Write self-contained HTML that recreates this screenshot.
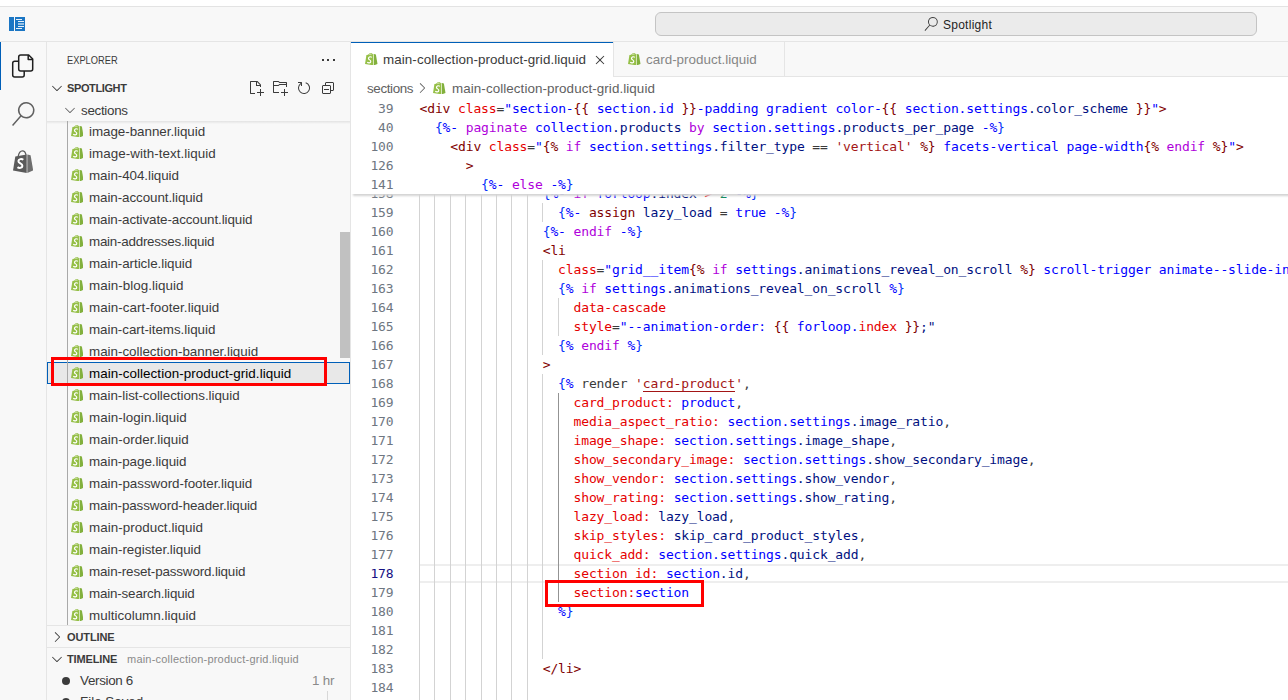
<!DOCTYPE html>
<html lang="en"><head><meta charset="utf-8"><title>Spotlight - main-collection-product-grid.liquid</title>
<style>
html,body{margin:0;padding:0}
body{width:1288px;height:700px;overflow:hidden;position:relative;background:#f8f8f8;font-family:"Liberation Sans",sans-serif;font-size:13.4px;color:#3b3b3b}
.abs{position:absolute}
.ui{position:absolute;white-space:nowrap;line-height:22px;height:22px;padding-top:1px}

.num{position:absolute;left:351px;width:42.5px;text-align:right;font-family:"DejaVu Sans Mono","Liberation Mono",monospace;font-size:13px;letter-spacing:-0.126px;line-height:19px;height:19px;white-space:pre}
.code{position:absolute;font-family:"DejaVu Sans Mono","Liberation Mono",monospace;font-size:13px;letter-spacing:-0.126px;line-height:19px;height:19px;white-space:pre}
.guide{position:absolute;width:1px;background:#d3d3d3}
</style></head><body>

<div class="abs" style="left:0;top:0;width:1288px;height:6px;background:#fff"></div>
<div class="abs" style="left:0;top:6px;width:1288px;height:1px;background:#e3e3e3"></div>
<div class="abs" style="left:0;top:41px;width:1288px;height:1px;background:#e5e5e5"></div>
<svg class="abs" style="left:9px;top:17px" width="16" height="14" viewBox="0 0 16 14"><rect x="0" y="0" width="5" height="14" fill="#1b76c4"/><rect x="6" y="0" width="10" height="14" fill="#1b76c4"/><g fill="#e8f1fa"><rect x="7" y="2" width="6" height="1"/><rect x="9" y="4" width="6" height="1"/><rect x="9" y="6" width="6" height="2" opacity=".6"/><rect x="9" y="9" width="6" height="1"/><rect x="7" y="11" width="6" height="1"/></g></svg>
<div class="abs" style="left:655px;top:12px;width:600px;height:22px;border:1px solid #c4c4c4;border-radius:6px;background:#ebebeb"></div>
<svg class="abs" style="left:924px;top:17px" width="14" height="14" viewBox="0 0 24 24"><path fill="#3b3b3b" d="M15.25 0a8.25 8.25 0 0 0-6.18 13.720L1 22.880l1.120 1 8.050-9.120A8.251 8.251 0 1 0 15.250.010V0zm0 15a6.750 6.750 0 1 1 0-13.500 6.750 6.750 0 0 1 0 13.500z"/></svg>
<div class="ui" id="t_spot" style="left:943px;top:13px;font-size:12px;color:#1f1f1f;letter-spacing:0.255px">Spotlight</div>
<div class="abs" style="left:46px;top:42px;width:1px;height:658px;background:#e5e5e5"></div>
<div class="abs" style="left:0;top:42px;width:1.2px;height:48px;background:#005fb8"></div>
<svg class="abs" style="left:11px;top:54px" width="24" height="24" viewBox="0 0 24 24" fill="none" stroke="#1f1f1f" stroke-width="1.5" stroke-linejoin="round"><path d="M7.700 7.200H3.700a2 2 0 0 0-2 2V21a2 2 0 0 0 2 2h7.500a2 2 0 0 0 2-2v-4"/><path d="M9.700 1h8l4 4v10a2 2 0 0 1-2 2H9.700a2 2 0 0 1-2-2V3a2 2 0 0 1 2-2z"/><path d="M17.200 1v4.500h4.500"/></svg>
<svg class="abs" style="left:11px;top:102px" width="24" height="24" viewBox="0 0 24 24"><path fill="#616161" d="M15.25 0a8.25 8.25 0 0 0-6.18 13.720L1 22.880l1.120 1 8.050-9.120A8.251 8.251 0 1 0 15.250.010V0zm0 15a6.750 6.750 0 1 1 0-13.500 6.750 6.750 0 0 1 0 13.500z"/></svg>
<svg class="abs" style="left:12.9px;top:149.7px" width="20.2" height="23" viewBox="0 0 20.2 23" preserveAspectRatio="none"><path d="M5.2 6.4C5.8 3.2 7.8 .9 9.500 .9s3 1.700 3.500 3.900" fill="none" stroke="#5a5a5a" stroke-width="1.3"/><path d="M2.3 6.600 13.700 4.600 13.700 22.900 0 20.600Z" fill="#5a5a5a"/><path d="M14.3 4.500 17.600 5.300 20.200 20.300 14.300 22.900Z" fill="#6e6e6e"/><path d="M10.3 9.700C8.700 8.500 5.500 8.900 5.400 11.100 5.300 13.500 9.500 13.300 9.400 15.900 9.300 18.100 6.100 18.400 4.500 17.100" fill="none" stroke="#fff" stroke-width="2"/></svg>
<div class="abs" style="left:350px;top:42px;width:1px;height:658px;background:#e5e5e5"></div>
<div class="ui" id="t_expl" style="left:67px;top:49px;font-size:11px;padding-top:0;transform:scaleX(.845);transform-origin:0 0">EXPLORER</div>
<div class="abs" style="left:321.5px;top:59px;width:2px;height:2px;background:#3b3b3b"></div>
<div class="abs" style="left:327px;top:59px;width:2px;height:2px;background:#3b3b3b"></div>
<div class="abs" style="left:332.5px;top:59px;width:2px;height:2px;background:#3b3b3b"></div>
<svg class="abs" style="left:49px;top:80px" width="16" height="16" viewBox="0 0 16 16" fill="#3b3b3b"><path fill-rule="evenodd" clip-rule="evenodd" d="M7.976 10.072l4.357-4.357.62.618L8.284 11h-.618L3 6.333l.619-.618 4.357 4.357z"/></svg>
<div class="ui" id="t_spl" style="left:67px;top:77px;font-size:11px;padding-top:0;font-weight:bold;letter-spacing:-0.384px">SPOTLIGHT</div>
<svg class="abs" style="left:248px;top:80px" width="16" height="16" viewBox="0 0 16 16" fill="#3b3b3b"><path fill-rule="evenodd" clip-rule="evenodd" d="M9.500 1.100l3.400 3.500.1.400v2h-1V6H8V2H3v11h4v1H2.500l-.5-.5v-12l.5-.5h6.700l.3.100zM9 2v3h2.900L9 2zm4 14h-1v-3H9v-1h3V9h1v3h3v1h-3v3z"/></svg>
<svg class="abs" style="left:271.5px;top:80px" width="16" height="16" viewBox="0 0 16 16" fill="#3b3b3b"><path fill-rule="evenodd" clip-rule="evenodd" d="M14.500 2H7.710l-.85-.85L6.510 1h-5l-.5.500v11l.5.500H7v-1H1.990V6h4.490l.35-.15.860-.86H14v1.500l-.001.510h1.011V2.500L14.500 2zm-.51 2h-6.500l-.35.150-.86.860H2v-3h4.290l.85.850.36.150H14l-.1.990zM13 16h-1v-3H9v-1h3V9h1v3h3v1h-3v3z"/></svg>
<svg class="abs" style="left:295.5px;top:80px" width="16" height="16" viewBox="0 0 16 16" fill="#3b3b3b"><path fill-rule="evenodd" clip-rule="evenodd" d="M4.681 3H2V2h3.500l.5.500V6H5V4a5 5 0 1 0 4.530-.761l.302-.954A6 6 0 1 1 4.681 3z"/></svg>
<svg class="abs" style="left:320px;top:80px" width="16" height="16" viewBox="0 0 16 16" fill="#3b3b3b"><path d="M9 9H4v1h5V9z"/><path fill-rule="evenodd" clip-rule="evenodd" d="M5 3l1-1h7l1 1v7l-1 1h-2v2l-1 1H3l-1-1V6l1-1h2V3zm1 2h4l1 1v4h2V3H6v2zm4 1H3v7h7V6z"/></svg>
<svg class="abs" style="left:62px;top:102px" width="16" height="16" viewBox="0 0 16 16" fill="#646465"><path fill-rule="evenodd" clip-rule="evenodd" d="M7.976 10.072l4.357-4.357.62.618L8.284 11h-.618L3 6.333l.619-.618 4.357 4.357z"/></svg>
<div class="ui" id="t_sec" style="left:81px;top:99px;letter-spacing:-0.303px">sections</div>
<div class="abs" style="left:47px;top:121px;width:303px;height:3px;background:linear-gradient(#e2e2e2,rgba(226,226,226,0))"></div>
<div class="abs" style="left:47px;top:362px;width:301px;height:20px;border:1px solid #005fb8;background:#e8e8e8"></div>
<div class="abs" style="left:67px;top:121px;width:1px;height:504px;background:#a9a9a9"></div>
<svg class="abs" style="left:70.6px;top:124.7px" width="12.5" height="12.4" viewBox="0 0 20.2 20" preserveAspectRatio="none"><path d="M5.500 3.400C6 1.600 7.800 .7 9.500 .7s3 .8 3.400 2" fill="none" stroke="#95bf47" stroke-width="1.3"/><path d="M2.300 3.400 13.500 1.600 13.500 19.900 0 17.600Z" fill="#95bf47"/><path d="M14.500 1.500 17.600 2.600 20.200 17.600 14.500 19.900Z" fill="#82b03d"/><path d="M11 7C9.400 5.500 5.900 5.900 5.600 8.400 5.300 11.100 9.700 11.100 9.300 13.900 9 16.300 5.400 16.600 3.600 15" fill="none" stroke="#fff" stroke-width="1.900"/></svg>
<div class="ui" id="f0" style="left:89px;top:120px;color:#3b3b3b;letter-spacing:-0.041px">image-banner.liquid</div>
<svg class="abs" style="left:70.6px;top:146.7px" width="12.5" height="12.4" viewBox="0 0 20.2 20" preserveAspectRatio="none"><path d="M5.500 3.400C6 1.600 7.800 .7 9.500 .7s3 .8 3.400 2" fill="none" stroke="#95bf47" stroke-width="1.3"/><path d="M2.300 3.400 13.500 1.600 13.500 19.900 0 17.600Z" fill="#95bf47"/><path d="M14.500 1.500 17.600 2.600 20.200 17.600 14.500 19.900Z" fill="#82b03d"/><path d="M11 7C9.400 5.500 5.900 5.900 5.600 8.400 5.300 11.100 9.700 11.100 9.300 13.900 9 16.300 5.400 16.600 3.600 15" fill="none" stroke="#fff" stroke-width="1.900"/></svg>
<div class="ui" id="f1" style="left:89px;top:142px;color:#3b3b3b;letter-spacing:0.046px">image-with-text.liquid</div>
<svg class="abs" style="left:70.6px;top:168.7px" width="12.5" height="12.4" viewBox="0 0 20.2 20" preserveAspectRatio="none"><path d="M5.500 3.400C6 1.600 7.800 .7 9.500 .7s3 .8 3.400 2" fill="none" stroke="#95bf47" stroke-width="1.3"/><path d="M2.300 3.400 13.500 1.600 13.500 19.900 0 17.600Z" fill="#95bf47"/><path d="M14.500 1.500 17.600 2.600 20.200 17.600 14.500 19.900Z" fill="#82b03d"/><path d="M11 7C9.400 5.500 5.900 5.900 5.600 8.400 5.300 11.100 9.700 11.100 9.300 13.900 9 16.300 5.400 16.600 3.600 15" fill="none" stroke="#fff" stroke-width="1.900"/></svg>
<div class="ui" id="f2" style="left:89px;top:164px;color:#3b3b3b;letter-spacing:-0.061px">main-404.liquid</div>
<svg class="abs" style="left:70.6px;top:190.7px" width="12.5" height="12.4" viewBox="0 0 20.2 20" preserveAspectRatio="none"><path d="M5.500 3.400C6 1.600 7.800 .7 9.500 .7s3 .8 3.400 2" fill="none" stroke="#95bf47" stroke-width="1.3"/><path d="M2.300 3.400 13.500 1.600 13.500 19.900 0 17.600Z" fill="#95bf47"/><path d="M14.500 1.500 17.600 2.600 20.200 17.600 14.500 19.900Z" fill="#82b03d"/><path d="M11 7C9.400 5.500 5.900 5.900 5.600 8.400 5.300 11.100 9.700 11.100 9.300 13.900 9 16.300 5.400 16.600 3.600 15" fill="none" stroke="#fff" stroke-width="1.900"/></svg>
<div class="ui" id="f3" style="left:89px;top:186px;color:#3b3b3b;letter-spacing:-0.078px">main-account.liquid</div>
<svg class="abs" style="left:70.6px;top:212.7px" width="12.5" height="12.4" viewBox="0 0 20.2 20" preserveAspectRatio="none"><path d="M5.500 3.400C6 1.600 7.800 .7 9.500 .7s3 .8 3.400 2" fill="none" stroke="#95bf47" stroke-width="1.3"/><path d="M2.300 3.400 13.500 1.600 13.500 19.900 0 17.600Z" fill="#95bf47"/><path d="M14.500 1.500 17.600 2.600 20.200 17.600 14.500 19.900Z" fill="#82b03d"/><path d="M11 7C9.400 5.500 5.900 5.900 5.600 8.400 5.300 11.100 9.700 11.100 9.300 13.900 9 16.300 5.400 16.600 3.600 15" fill="none" stroke="#fff" stroke-width="1.900"/></svg>
<div class="ui" id="f4" style="left:89px;top:208px;color:#3b3b3b;letter-spacing:-0.092px">main-activate-account.liquid</div>
<svg class="abs" style="left:70.6px;top:234.7px" width="12.5" height="12.4" viewBox="0 0 20.2 20" preserveAspectRatio="none"><path d="M5.500 3.400C6 1.600 7.800 .7 9.500 .7s3 .8 3.400 2" fill="none" stroke="#95bf47" stroke-width="1.3"/><path d="M2.300 3.400 13.500 1.600 13.500 19.900 0 17.600Z" fill="#95bf47"/><path d="M14.500 1.500 17.600 2.600 20.200 17.600 14.500 19.900Z" fill="#82b03d"/><path d="M11 7C9.400 5.500 5.900 5.900 5.600 8.400 5.300 11.100 9.700 11.100 9.300 13.900 9 16.300 5.400 16.600 3.600 15" fill="none" stroke="#fff" stroke-width="1.900"/></svg>
<div class="ui" id="f5" style="left:89px;top:230px;color:#3b3b3b;letter-spacing:-0.241px">main-addresses.liquid</div>
<svg class="abs" style="left:70.6px;top:256.7px" width="12.5" height="12.4" viewBox="0 0 20.2 20" preserveAspectRatio="none"><path d="M5.500 3.400C6 1.600 7.800 .7 9.500 .7s3 .8 3.400 2" fill="none" stroke="#95bf47" stroke-width="1.3"/><path d="M2.300 3.400 13.500 1.600 13.500 19.900 0 17.600Z" fill="#95bf47"/><path d="M14.500 1.500 17.600 2.600 20.200 17.600 14.500 19.900Z" fill="#82b03d"/><path d="M11 7C9.400 5.500 5.900 5.900 5.600 8.400 5.300 11.100 9.700 11.100 9.300 13.900 9 16.300 5.400 16.600 3.600 15" fill="none" stroke="#fff" stroke-width="1.900"/></svg>
<div class="ui" id="f6" style="left:89px;top:252px;color:#3b3b3b;letter-spacing:-0.053px">main-article.liquid</div>
<svg class="abs" style="left:70.6px;top:278.7px" width="12.5" height="12.4" viewBox="0 0 20.2 20" preserveAspectRatio="none"><path d="M5.500 3.400C6 1.600 7.800 .7 9.500 .7s3 .8 3.400 2" fill="none" stroke="#95bf47" stroke-width="1.3"/><path d="M2.300 3.400 13.500 1.600 13.500 19.900 0 17.600Z" fill="#95bf47"/><path d="M14.500 1.500 17.600 2.600 20.200 17.600 14.500 19.900Z" fill="#82b03d"/><path d="M11 7C9.400 5.500 5.900 5.900 5.600 8.400 5.300 11.100 9.700 11.100 9.300 13.900 9 16.300 5.400 16.600 3.600 15" fill="none" stroke="#fff" stroke-width="1.900"/></svg>
<div class="ui" id="f7" style="left:89px;top:274px;color:#3b3b3b;letter-spacing:0.05px">main-blog.liquid</div>
<svg class="abs" style="left:70.6px;top:300.7px" width="12.5" height="12.4" viewBox="0 0 20.2 20" preserveAspectRatio="none"><path d="M5.500 3.400C6 1.600 7.800 .7 9.500 .7s3 .8 3.400 2" fill="none" stroke="#95bf47" stroke-width="1.3"/><path d="M2.300 3.400 13.500 1.600 13.500 19.900 0 17.600Z" fill="#95bf47"/><path d="M14.500 1.500 17.600 2.600 20.200 17.600 14.500 19.900Z" fill="#82b03d"/><path d="M11 7C9.400 5.500 5.900 5.900 5.600 8.400 5.300 11.100 9.700 11.100 9.300 13.900 9 16.300 5.400 16.600 3.600 15" fill="none" stroke="#fff" stroke-width="1.900"/></svg>
<div class="ui" id="f8" style="left:89px;top:296px;color:#3b3b3b;letter-spacing:0.067px">main-cart-footer.liquid</div>
<svg class="abs" style="left:70.6px;top:322.7px" width="12.5" height="12.4" viewBox="0 0 20.2 20" preserveAspectRatio="none"><path d="M5.500 3.400C6 1.600 7.800 .7 9.500 .7s3 .8 3.400 2" fill="none" stroke="#95bf47" stroke-width="1.3"/><path d="M2.300 3.400 13.500 1.600 13.500 19.900 0 17.600Z" fill="#95bf47"/><path d="M14.500 1.500 17.600 2.600 20.200 17.600 14.500 19.900Z" fill="#82b03d"/><path d="M11 7C9.400 5.500 5.900 5.900 5.600 8.400 5.300 11.100 9.700 11.100 9.300 13.900 9 16.300 5.400 16.600 3.600 15" fill="none" stroke="#fff" stroke-width="1.900"/></svg>
<div class="ui" id="f9" style="left:89px;top:318px;color:#3b3b3b;letter-spacing:-0.043px">main-cart-items.liquid</div>
<svg class="abs" style="left:70.6px;top:344.7px" width="12.5" height="12.4" viewBox="0 0 20.2 20" preserveAspectRatio="none"><path d="M5.500 3.400C6 1.600 7.800 .7 9.500 .7s3 .8 3.400 2" fill="none" stroke="#95bf47" stroke-width="1.3"/><path d="M2.300 3.400 13.500 1.600 13.500 19.900 0 17.600Z" fill="#95bf47"/><path d="M14.500 1.500 17.600 2.600 20.200 17.600 14.500 19.900Z" fill="#82b03d"/><path d="M11 7C9.400 5.500 5.900 5.900 5.600 8.400 5.300 11.100 9.700 11.100 9.300 13.900 9 16.300 5.400 16.600 3.600 15" fill="none" stroke="#fff" stroke-width="1.900"/></svg>
<div class="ui" id="f10" style="left:89px;top:340px;color:#3b3b3b;letter-spacing:-0.021px">main-collection-banner.liquid</div>
<svg class="abs" style="left:70.6px;top:366.7px" width="12.5" height="12.4" viewBox="0 0 20.2 20" preserveAspectRatio="none"><path d="M5.500 3.400C6 1.600 7.800 .7 9.500 .7s3 .8 3.400 2" fill="none" stroke="#95bf47" stroke-width="1.3"/><path d="M2.300 3.400 13.500 1.600 13.500 19.900 0 17.600Z" fill="#95bf47"/><path d="M14.500 1.500 17.600 2.600 20.200 17.600 14.500 19.900Z" fill="#82b03d"/><path d="M11 7C9.400 5.500 5.900 5.900 5.600 8.400 5.300 11.100 9.700 11.100 9.300 13.900 9 16.300 5.400 16.600 3.600 15" fill="none" stroke="#fff" stroke-width="1.900"/></svg>
<div class="ui" id="f11" style="left:89px;top:362px;color:#000;letter-spacing:0.059px">main-collection-product-grid.liquid</div>
<svg class="abs" style="left:70.6px;top:388.7px" width="12.5" height="12.4" viewBox="0 0 20.2 20" preserveAspectRatio="none"><path d="M5.500 3.400C6 1.600 7.800 .7 9.500 .7s3 .8 3.400 2" fill="none" stroke="#95bf47" stroke-width="1.3"/><path d="M2.300 3.400 13.500 1.600 13.500 19.900 0 17.600Z" fill="#95bf47"/><path d="M14.500 1.500 17.600 2.600 20.200 17.600 14.500 19.900Z" fill="#82b03d"/><path d="M11 7C9.400 5.500 5.900 5.900 5.600 8.400 5.300 11.100 9.700 11.100 9.300 13.900 9 16.300 5.400 16.600 3.600 15" fill="none" stroke="#fff" stroke-width="1.900"/></svg>
<div class="ui" id="f12" style="left:89px;top:384px;color:#3b3b3b;letter-spacing:-0.044px">main-list-collections.liquid</div>
<svg class="abs" style="left:70.6px;top:410.7px" width="12.5" height="12.4" viewBox="0 0 20.2 20" preserveAspectRatio="none"><path d="M5.500 3.400C6 1.600 7.800 .7 9.500 .7s3 .8 3.400 2" fill="none" stroke="#95bf47" stroke-width="1.3"/><path d="M2.300 3.400 13.500 1.600 13.500 19.900 0 17.600Z" fill="#95bf47"/><path d="M14.500 1.500 17.600 2.600 20.200 17.600 14.500 19.900Z" fill="#82b03d"/><path d="M11 7C9.400 5.500 5.900 5.900 5.600 8.400 5.300 11.100 9.700 11.100 9.300 13.900 9 16.300 5.400 16.600 3.600 15" fill="none" stroke="#fff" stroke-width="1.900"/></svg>
<div class="ui" id="f13" style="left:89px;top:406px;color:#3b3b3b;letter-spacing:0.061px">main-login.liquid</div>
<svg class="abs" style="left:70.6px;top:432.7px" width="12.5" height="12.4" viewBox="0 0 20.2 20" preserveAspectRatio="none"><path d="M5.500 3.400C6 1.600 7.800 .7 9.500 .7s3 .8 3.400 2" fill="none" stroke="#95bf47" stroke-width="1.3"/><path d="M2.300 3.400 13.500 1.600 13.500 19.900 0 17.600Z" fill="#95bf47"/><path d="M14.500 1.500 17.600 2.600 20.200 17.600 14.500 19.900Z" fill="#82b03d"/><path d="M11 7C9.400 5.500 5.900 5.900 5.600 8.400 5.300 11.100 9.700 11.100 9.300 13.900 9 16.300 5.400 16.600 3.600 15" fill="none" stroke="#fff" stroke-width="1.900"/></svg>
<div class="ui" id="f14" style="left:89px;top:428px;color:#3b3b3b;letter-spacing:0.041px">main-order.liquid</div>
<svg class="abs" style="left:70.6px;top:454.7px" width="12.5" height="12.4" viewBox="0 0 20.2 20" preserveAspectRatio="none"><path d="M5.500 3.400C6 1.600 7.800 .7 9.500 .7s3 .8 3.400 2" fill="none" stroke="#95bf47" stroke-width="1.3"/><path d="M2.300 3.400 13.500 1.600 13.500 19.900 0 17.600Z" fill="#95bf47"/><path d="M14.500 1.500 17.600 2.600 20.200 17.600 14.500 19.900Z" fill="#82b03d"/><path d="M11 7C9.400 5.500 5.900 5.900 5.600 8.400 5.300 11.100 9.700 11.100 9.300 13.900 9 16.300 5.400 16.600 3.600 15" fill="none" stroke="#fff" stroke-width="1.900"/></svg>
<div class="ui" id="f15" style="left:89px;top:450px;color:#3b3b3b;letter-spacing:-0.054px">main-page.liquid</div>
<svg class="abs" style="left:70.6px;top:476.7px" width="12.5" height="12.4" viewBox="0 0 20.2 20" preserveAspectRatio="none"><path d="M5.500 3.400C6 1.600 7.800 .7 9.500 .7s3 .8 3.400 2" fill="none" stroke="#95bf47" stroke-width="1.3"/><path d="M2.300 3.400 13.500 1.600 13.500 19.900 0 17.600Z" fill="#95bf47"/><path d="M14.500 1.500 17.600 2.600 20.200 17.600 14.500 19.900Z" fill="#82b03d"/><path d="M11 7C9.400 5.500 5.900 5.900 5.600 8.400 5.300 11.100 9.700 11.100 9.300 13.900 9 16.300 5.400 16.600 3.600 15" fill="none" stroke="#fff" stroke-width="1.900"/></svg>
<div class="ui" id="f16" style="left:89px;top:472px;color:#3b3b3b;letter-spacing:-0.02px">main-password-footer.liquid</div>
<svg class="abs" style="left:70.6px;top:498.7px" width="12.5" height="12.4" viewBox="0 0 20.2 20" preserveAspectRatio="none"><path d="M5.500 3.400C6 1.600 7.800 .7 9.500 .7s3 .8 3.400 2" fill="none" stroke="#95bf47" stroke-width="1.3"/><path d="M2.300 3.400 13.500 1.600 13.500 19.900 0 17.600Z" fill="#95bf47"/><path d="M14.500 1.500 17.600 2.600 20.200 17.600 14.500 19.900Z" fill="#82b03d"/><path d="M11 7C9.400 5.500 5.900 5.900 5.600 8.400 5.300 11.100 9.700 11.100 9.300 13.900 9 16.300 5.400 16.600 3.600 15" fill="none" stroke="#fff" stroke-width="1.900"/></svg>
<div class="ui" id="f17" style="left:89px;top:494px;color:#3b3b3b;letter-spacing:-0.111px">main-password-header.liquid</div>
<svg class="abs" style="left:70.6px;top:520.7px" width="12.5" height="12.4" viewBox="0 0 20.2 20" preserveAspectRatio="none"><path d="M5.500 3.400C6 1.600 7.800 .7 9.500 .7s3 .8 3.400 2" fill="none" stroke="#95bf47" stroke-width="1.3"/><path d="M2.300 3.400 13.500 1.600 13.500 19.900 0 17.600Z" fill="#95bf47"/><path d="M14.500 1.500 17.600 2.600 20.200 17.600 14.500 19.900Z" fill="#82b03d"/><path d="M11 7C9.400 5.500 5.900 5.900 5.600 8.400 5.300 11.100 9.700 11.100 9.300 13.900 9 16.300 5.400 16.600 3.600 15" fill="none" stroke="#fff" stroke-width="1.900"/></svg>
<div class="ui" id="f18" style="left:89px;top:516px;color:#3b3b3b;letter-spacing:0.04px">main-product.liquid</div>
<svg class="abs" style="left:70.6px;top:542.7px" width="12.5" height="12.4" viewBox="0 0 20.2 20" preserveAspectRatio="none"><path d="M5.500 3.400C6 1.600 7.800 .7 9.500 .7s3 .8 3.400 2" fill="none" stroke="#95bf47" stroke-width="1.3"/><path d="M2.300 3.400 13.500 1.600 13.500 19.900 0 17.600Z" fill="#95bf47"/><path d="M14.500 1.500 17.600 2.600 20.200 17.600 14.500 19.900Z" fill="#82b03d"/><path d="M11 7C9.400 5.500 5.900 5.900 5.600 8.400 5.300 11.100 9.700 11.100 9.300 13.900 9 16.300 5.400 16.600 3.600 15" fill="none" stroke="#fff" stroke-width="1.900"/></svg>
<div class="ui" id="f19" style="left:89px;top:538px;color:#3b3b3b;letter-spacing:-0.02px">main-register.liquid</div>
<svg class="abs" style="left:70.6px;top:564.7px" width="12.5" height="12.4" viewBox="0 0 20.2 20" preserveAspectRatio="none"><path d="M5.500 3.400C6 1.600 7.800 .7 9.500 .7s3 .8 3.400 2" fill="none" stroke="#95bf47" stroke-width="1.3"/><path d="M2.300 3.400 13.500 1.600 13.500 19.900 0 17.600Z" fill="#95bf47"/><path d="M14.500 1.500 17.600 2.600 20.200 17.600 14.500 19.900Z" fill="#82b03d"/><path d="M11 7C9.400 5.500 5.900 5.900 5.600 8.400 5.300 11.100 9.700 11.100 9.300 13.900 9 16.300 5.400 16.600 3.600 15" fill="none" stroke="#fff" stroke-width="1.900"/></svg>
<div class="ui" id="f20" style="left:89px;top:560px;color:#3b3b3b;letter-spacing:-0.143px">main-reset-password.liquid</div>
<svg class="abs" style="left:70.6px;top:586.7px" width="12.5" height="12.4" viewBox="0 0 20.2 20" preserveAspectRatio="none"><path d="M5.500 3.400C6 1.600 7.800 .7 9.500 .7s3 .8 3.400 2" fill="none" stroke="#95bf47" stroke-width="1.3"/><path d="M2.300 3.400 13.500 1.600 13.500 19.900 0 17.600Z" fill="#95bf47"/><path d="M14.500 1.500 17.600 2.600 20.200 17.600 14.500 19.900Z" fill="#82b03d"/><path d="M11 7C9.400 5.500 5.900 5.900 5.600 8.400 5.300 11.100 9.700 11.100 9.300 13.900 9 16.300 5.400 16.600 3.600 15" fill="none" stroke="#fff" stroke-width="1.900"/></svg>
<div class="ui" id="f21" style="left:89px;top:582px;color:#3b3b3b;letter-spacing:-0.176px">main-search.liquid</div>
<svg class="abs" style="left:70.6px;top:608.7px" width="12.5" height="12.4" viewBox="0 0 20.2 20" preserveAspectRatio="none"><path d="M5.500 3.400C6 1.600 7.800 .7 9.500 .7s3 .8 3.400 2" fill="none" stroke="#95bf47" stroke-width="1.3"/><path d="M2.300 3.400 13.500 1.600 13.500 19.900 0 17.600Z" fill="#95bf47"/><path d="M14.500 1.500 17.600 2.600 20.200 17.600 14.500 19.900Z" fill="#82b03d"/><path d="M11 7C9.400 5.500 5.900 5.900 5.600 8.400 5.300 11.100 9.700 11.100 9.300 13.900 9 16.300 5.400 16.600 3.600 15" fill="none" stroke="#fff" stroke-width="1.900"/></svg>
<div class="ui" id="f22" style="left:89px;top:604px;color:#3b3b3b;letter-spacing:0.031px">multicolumn.liquid</div>
<div class="abs" style="left:340px;top:232px;width:10px;height:126px;background:#c1c1c1"></div>
<div class="abs" style="left:47px;top:625px;width:303px;height:75px;background:#f8f8f8"></div>
<div class="abs" style="left:47px;top:625px;width:303px;height:1px;background:#e5e5e5"></div>
<svg class="abs" style="left:49px;top:629px" width="16" height="16" viewBox="0 0 16 16" fill="#3b3b3b"><path fill-rule="evenodd" clip-rule="evenodd" d="M10.072 8.024L5.715 3.667l.618-.62L11 7.716v.618L6.333 13l-.618-.619 4.357-4.357z"/></svg>
<div class="ui" id="t_out" style="left:67px;top:626px;font-size:11px;padding-top:0;font-weight:bold;letter-spacing:-0.112px">OUTLINE</div>
<div class="abs" style="left:47px;top:647px;width:303px;height:1px;background:#e5e5e5"></div>
<svg class="abs" style="left:49px;top:651px" width="16" height="16" viewBox="0 0 16 16" fill="#3b3b3b"><path fill-rule="evenodd" clip-rule="evenodd" d="M7.976 10.072l4.357-4.357.62.618L8.284 11h-.618L3 6.333l.619-.618 4.357 4.357z"/></svg>
<div class="ui" id="t_tl" style="left:67px;top:648px;font-size:11px;padding-top:0;font-weight:bold;letter-spacing:-0.143px">TIMELINE</div>
<div class="ui" id="t_tlf" style="left:127px;top:648px;font-size:11px;padding-top:0;color:#8a8a8a;letter-spacing:0.212px">main-collection-product-grid.liquid</div>
<div class="abs" style="left:62px;top:676.5px;width:8px;height:8px;border-radius:50%;background:#3b3b3b"></div>
<div class="ui" id="t_v6" style="left:80px;top:669px;letter-spacing:-0.316px">Version 6</div>
<div class="ui" id="t_hr" style="left:312px;top:669px;color:#8a8a8a;letter-spacing:-0.17px">1 hr</div>
<div class="abs" style="left:62px;top:697.5px;width:8px;height:8px;border-radius:50%;background:#3b3b3b"></div>
<div class="ui" id="t_fs" style="left:80px;top:690px;letter-spacing:0px">File Saved</div>
<div class="abs" style="left:327px;top:691px;width:1px;height:9px;background:#d8d8d8"></div>
<div class="abs" style="left:51px;top:357px;width:270px;height:23px;border:3px solid #ff0000"></div>
<div class="abs" style="left:351px;top:77px;width:937px;height:623px;background:#fff"></div>
<div class="abs" style="left:351px;top:76px;width:937px;height:1px;background:#e5e5e5"></div>
<div class="abs" style="left:351px;top:42px;width:262px;height:35px;background:#fff"></div>
<div class="abs" style="left:351px;top:42px;width:262px;height:1px;background:#005fb8"></div>
<div class="abs" style="left:613px;top:42px;width:1px;height:34px;background:#e5e5e5"></div>
<div class="abs" style="left:784px;top:42px;width:1px;height:34px;background:#e5e5e5"></div>
<svg class="abs" style="left:365.2px;top:52.5px" width="12.5" height="12.4" viewBox="0 0 20.2 20" preserveAspectRatio="none"><path d="M5.500 3.400C6 1.600 7.800 .7 9.500 .7s3 .8 3.400 2" fill="none" stroke="#95bf47" stroke-width="1.3"/><path d="M2.300 3.400 13.500 1.600 13.500 19.900 0 17.600Z" fill="#95bf47"/><path d="M14.500 1.500 17.600 2.600 20.200 17.600 14.500 19.900Z" fill="#82b03d"/><path d="M11 7C9.400 5.500 5.900 5.900 5.600 8.400 5.300 11.100 9.700 11.100 9.300 13.900 9 16.300 5.400 16.600 3.600 15" fill="none" stroke="#fff" stroke-width="1.900"/></svg>
<div class="ui" id="t_tab1" style="left:383px;top:48px;letter-spacing:0.079px">main-collection-product-grid.liquid</div>
<svg class="abs" style="left:591.5px;top:51.5px" width="16" height="16" viewBox="0 0 16 16" fill="#3b3b3b"><path fill-rule="evenodd" clip-rule="evenodd" d="M8 8.707l3.646 3.647.708-.707L8.707 8l3.647-3.646-.707-.708L8 7.293 4.354 3.646l-.707.708L7.293 8l-3.646 3.646.707.708L8 8.707z"/></svg>
<svg class="abs" style="left:628.1px;top:52.5px" width="12.5" height="12.4" viewBox="0 0 20.2 20" preserveAspectRatio="none"><path d="M5.500 3.400C6 1.600 7.800 .7 9.500 .7s3 .8 3.400 2" fill="none" stroke="#95bf47" stroke-width="1.3"/><path d="M2.300 3.400 13.500 1.600 13.500 19.900 0 17.600Z" fill="#95bf47"/><path d="M14.500 1.500 17.600 2.600 20.200 17.600 14.500 19.900Z" fill="#82b03d"/><path d="M11 7C9.400 5.500 5.900 5.900 5.600 8.400 5.300 11.100 9.700 11.100 9.300 13.900 9 16.300 5.400 16.600 3.600 15" fill="none" stroke="#fff" stroke-width="1.900"/></svg>
<div class="ui" id="t_tab2" style="left:646px;top:48px;color:#868686;letter-spacing:0.023px">card-product.liquid</div>
<div class="ui" id="t_bc1" style="left:367px;top:77px;color:#616161;letter-spacing:-0.366px">sections</div>
<svg class="abs" style="left:414px;top:80px" width="16" height="16" viewBox="0 0 16 16" fill="#616161"><path fill-rule="evenodd" clip-rule="evenodd" d="M10.072 8.024L5.715 3.667l.618-.62L11 7.716v.618L6.333 13l-.618-.619 4.357-4.357z"/></svg>
<svg class="abs" style="left:433px;top:81.7px" width="12.5" height="12.4" viewBox="0 0 20.2 20" preserveAspectRatio="none"><path d="M5.500 3.400C6 1.600 7.800 .7 9.500 .7s3 .8 3.400 2" fill="none" stroke="#95bf47" stroke-width="1.3"/><path d="M2.300 3.400 13.500 1.600 13.500 19.900 0 17.600Z" fill="#95bf47"/><path d="M14.500 1.500 17.600 2.600 20.200 17.600 14.500 19.900Z" fill="#82b03d"/><path d="M11 7C9.400 5.500 5.900 5.900 5.600 8.400 5.300 11.100 9.700 11.100 9.300 13.900 9 16.300 5.400 16.600 3.600 15" fill="none" stroke="#fff" stroke-width="1.900"/></svg>
<div class="ui" id="t_bc2" style="left:452px;top:77px;color:#616161;letter-spacing:0.079px">main-collection-product-grid.liquid</div>
<div class="abs" style="left:419px;top:564px;width:880px;height:15px;border-top:2px solid #eee;border-bottom:2px solid #eee"></div>
<div class="guide" style="left:419px;top:194px;height:506px;background:#d3d3d3"></div>
<div class="guide" style="left:434px;top:194px;height:506px;background:#d3d3d3"></div>
<div class="guide" style="left:450px;top:194px;height:506px;background:#d3d3d3"></div>
<div class="guide" style="left:465px;top:194px;height:506px;background:#d3d3d3"></div>
<div class="guide" style="left:481px;top:194px;height:506px;background:#d3d3d3"></div>
<div class="guide" style="left:496px;top:194px;height:506px;background:#d3d3d3"></div>
<div class="guide" style="left:511px;top:194px;height:506px;background:#d3d3d3"></div>
<div class="guide" style="left:527px;top:194px;height:506px;background:#d3d3d3"></div>
<div class="guide" style="left:542px;top:203px;height:19px;background:#d3d3d3"></div>
<div class="guide" style="left:542px;top:260px;height:95px;background:#d3d3d3"></div>
<div class="guide" style="left:542px;top:374px;height:285px;background:#d3d3d3"></div>
<div class="guide" style="left:558px;top:298px;height:38px;background:#d3d3d3"></div>
<div class="guide" style="left:558px;top:393px;height:209px;background:#939393"></div>
<div class="num" style="top:184px;color:#6e7681">158</div>
<div class="code" style="top:184px;left:542.70px"><span style="color:#0431fa">{</span><span style="color:#0000ff">%-</span><span style="color:#3b3b3b"> </span><span style="color:#af00db">if</span><span style="color:#3b3b3b"> </span><span style="color:#0000ff">forloop</span><span style="color:#001080">.index</span><span style="color:#3b3b3b"> </span><span style="color:#e50000">&gt;</span><span style="color:#3b3b3b"> </span><span style="color:#098658">2</span><span style="color:#3b3b3b"> </span><span style="color:#0000ff">-%</span><span style="color:#0431fa">}</span></div>
<div class="num" style="top:203px;color:#6e7681">159</div>
<div class="code" style="top:203px;left:558.10px"><span style="color:#0431fa">{</span><span style="color:#0000ff">%-</span><span style="color:#3b3b3b"> </span><span style="color:#800000">assign</span><span style="color:#3b3b3b"> </span><span style="color:#001080">lazy_load</span><span style="color:#3b3b3b"> = </span><span style="color:#0000ff">true</span><span style="color:#3b3b3b"> </span><span style="color:#0000ff">-%</span><span style="color:#0431fa">}</span></div>
<div class="num" style="top:222px;color:#6e7681">160</div>
<div class="code" style="top:222px;left:542.70px"><span style="color:#0431fa">{</span><span style="color:#0000ff">%-</span><span style="color:#3b3b3b"> </span><span style="color:#af00db">endif</span><span style="color:#3b3b3b"> </span><span style="color:#0000ff">-%</span><span style="color:#0431fa">}</span></div>
<div class="num" style="top:241px;color:#6e7681">161</div>
<div class="code" style="top:241px;left:542.70px"><span style="color:#800000">&lt;li</span></div>
<div class="num" style="top:260px;color:#6e7681">162</div>
<div class="code" style="top:260px;left:558.10px"><span style="color:#e50000">class</span><span style="color:#3b3b3b">=</span><span style="color:#0000ff">"grid__item</span><span style="color:#800000">{%</span><span style="color:#3b3b3b"> </span><span style="color:#af00db">if</span><span style="color:#3b3b3b"> </span><span style="color:#0000ff">settings</span><span style="color:#001080">.animations_reveal_on_scroll</span><span style="color:#3b3b3b"> </span><span style="color:#800000">%}</span><span style="color:#0000ff"> scroll-trigger animate--slide-in</span></div>
<div class="num" style="top:279px;color:#6e7681">163</div>
<div class="code" style="top:279px;left:558.10px"><span style="color:#0431fa">{</span><span style="color:#0000ff">%</span><span style="color:#3b3b3b"> </span><span style="color:#af00db">if</span><span style="color:#3b3b3b"> </span><span style="color:#0000ff">settings</span><span style="color:#001080">.animations_reveal_on_scroll</span><span style="color:#3b3b3b"> </span><span style="color:#0000ff">%</span><span style="color:#0431fa">}</span></div>
<div class="num" style="top:298px;color:#6e7681">164</div>
<div class="code" style="top:298px;left:573.50px"><span style="color:#e50000">data-cascade</span></div>
<div class="num" style="top:317px;color:#6e7681">165</div>
<div class="code" style="top:317px;left:573.50px"><span style="color:#e50000">style</span><span style="color:#3b3b3b">=</span><span style="color:#0000ff">"--animation-order: </span><span style="color:#800000">{{</span><span style="color:#0000ff"> forloop.</span><span style="color:#e50000">index</span><span style="color:#3b3b3b"> </span><span style="color:#800000">}}</span><span style="color:#001080">;"</span></div>
<div class="num" style="top:336px;color:#6e7681">166</div>
<div class="code" style="top:336px;left:558.10px"><span style="color:#0431fa">{</span><span style="color:#0000ff">%</span><span style="color:#3b3b3b"> </span><span style="color:#af00db">endif</span><span style="color:#3b3b3b"> </span><span style="color:#0000ff">%</span><span style="color:#0431fa">}</span></div>
<div class="num" style="top:355px;color:#6e7681">167</div>
<div class="code" style="top:355px;left:542.70px"><span style="color:#800000">&gt;</span></div>
<div class="num" style="top:374px;color:#6e7681">168</div>
<div class="code" style="top:374px;left:558.10px"><span style="color:#0431fa">{</span><span style="color:#0000ff">%</span><span style="color:#3b3b3b"> render </span><span style="color:#a31515">'</span><span style="color:#a31515;border-bottom:1px solid #a31515">card-product</span><span style="color:#a31515">'</span><span style="color:#3b3b3b">,</span></div>
<div class="num" style="top:393px;color:#6e7681">169</div>
<div class="code" style="top:393px;left:573.50px"><span style="color:#e50000">card_product:</span><span style="color:#3b3b3b"> </span><span style="color:#0000ff">product</span><span style="color:#3b3b3b">,</span></div>
<div class="num" style="top:412px;color:#6e7681">170</div>
<div class="code" style="top:412px;left:573.50px"><span style="color:#e50000">media_aspect_ratio:</span><span style="color:#3b3b3b"> </span><span style="color:#0000ff">section.settings</span><span style="color:#001080">.image_ratio</span><span style="color:#3b3b3b">,</span></div>
<div class="num" style="top:431px;color:#6e7681">171</div>
<div class="code" style="top:431px;left:573.50px"><span style="color:#e50000">image_shape:</span><span style="color:#3b3b3b"> </span><span style="color:#0000ff">section.settings</span><span style="color:#001080">.image_shape</span><span style="color:#3b3b3b">,</span></div>
<div class="num" style="top:450px;color:#6e7681">172</div>
<div class="code" style="top:450px;left:573.50px"><span style="color:#e50000">show_secondary_image:</span><span style="color:#3b3b3b"> </span><span style="color:#0000ff">section.settings</span><span style="color:#001080">.show_secondary_image</span><span style="color:#3b3b3b">,</span></div>
<div class="num" style="top:469px;color:#6e7681">173</div>
<div class="code" style="top:469px;left:573.50px"><span style="color:#e50000">show_vendor:</span><span style="color:#3b3b3b"> </span><span style="color:#0000ff">section.settings</span><span style="color:#001080">.show_vendor</span><span style="color:#3b3b3b">,</span></div>
<div class="num" style="top:488px;color:#6e7681">174</div>
<div class="code" style="top:488px;left:573.50px"><span style="color:#e50000">show_rating:</span><span style="color:#3b3b3b"> </span><span style="color:#0000ff">section.settings</span><span style="color:#001080">.show_rating</span><span style="color:#3b3b3b">,</span></div>
<div class="num" style="top:507px;color:#6e7681">175</div>
<div class="code" style="top:507px;left:573.50px"><span style="color:#e50000">lazy_load:</span><span style="color:#3b3b3b"> </span><span style="color:#001080">lazy_load</span><span style="color:#3b3b3b">,</span></div>
<div class="num" style="top:526px;color:#6e7681">176</div>
<div class="code" style="top:526px;left:573.50px"><span style="color:#e50000">skip_styles:</span><span style="color:#3b3b3b"> </span><span style="color:#001080">skip_card_product_styles</span><span style="color:#3b3b3b">,</span></div>
<div class="num" style="top:545px;color:#6e7681">177</div>
<div class="code" style="top:545px;left:573.50px"><span style="color:#e50000">quick_add:</span><span style="color:#3b3b3b"> </span><span style="color:#0000ff">section.settings</span><span style="color:#001080">.quick_add</span><span style="color:#3b3b3b">,</span></div>
<div class="num" style="top:564px;color:#171184">178</div>
<div class="code" style="top:564px;left:573.50px"><span style="color:#e50000">section_id:</span><span style="color:#3b3b3b"> </span><span style="color:#0000ff">section</span><span style="color:#001080">.id</span><span style="color:#3b3b3b">,</span></div>
<div class="num" style="top:583px;color:#6e7681">179</div>
<div class="code" style="top:583px;left:573.50px"><span style="color:#e50000">section:</span><span style="color:#0000ff">section</span></div>
<div class="num" style="top:602px;color:#6e7681">180</div>
<div class="code" style="top:602px;left:558.10px"><span style="color:#0000ff">%</span><span style="color:#0431fa">}</span></div>
<div class="num" style="top:621px;color:#6e7681">181</div>
<div class="num" style="top:640px;color:#6e7681">182</div>
<div class="num" style="top:659px;color:#6e7681">183</div>
<div class="code" style="top:659px;left:542.70px"><span style="color:#800000">&lt;/li&gt;</span></div>
<div class="num" style="top:678px;color:#6e7681">184</div>
<div class="abs" style="left:545px;top:580px;width:153px;height:21px;border:3px solid #ff0000"></div>
<div class="abs" style="left:351px;top:99px;width:960px;height:95px;background:#fff;box-shadow:0 4px 2px -2px #d4d4d4"></div>
<div class="num" style="top:99px;color:#6e7681">39</div>
<div class="code" style="top:99px;left:419.50px"><span style="color:#800000">&lt;div</span><span style="color:#3b3b3b"> </span><span style="color:#e50000">class</span><span style="color:#3b3b3b">=</span><span style="color:#0000ff">"section-</span><span style="color:#800000">{{</span><span style="color:#0000ff"> section.id </span><span style="color:#800000">}}</span><span style="color:#0000ff">-padding gradient color-</span><span style="color:#800000">{{</span><span style="color:#0000ff"> section.settings</span><span style="color:#001080">.color_scheme </span><span style="color:#800000">}}</span><span style="color:#0000ff">"</span><span style="color:#800000">&gt;</span></div>
<div class="num" style="top:118px;color:#6e7681">40</div>
<div class="code" style="top:118px;left:434.90px"><span style="color:#0431fa">{</span><span style="color:#0000ff">%-</span><span style="color:#3b3b3b"> </span><span style="color:#af00db">paginate</span><span style="color:#3b3b3b"> </span><span style="color:#0000ff">collection</span><span style="color:#001080">.products</span><span style="color:#3b3b3b"> </span><span style="color:#af00db">by</span><span style="color:#3b3b3b"> </span><span style="color:#0000ff">section.settings</span><span style="color:#001080">.products_per_page</span><span style="color:#3b3b3b"> </span><span style="color:#0000ff">-%</span><span style="color:#0431fa">}</span></div>
<div class="num" style="top:137px;color:#6e7681">100</div>
<div class="code" style="top:137px;left:450.30px"><span style="color:#800000">&lt;div</span><span style="color:#3b3b3b"> </span><span style="color:#e50000">class</span><span style="color:#3b3b3b">=</span><span style="color:#0000ff">"</span><span style="color:#800000">{%</span><span style="color:#3b3b3b"> </span><span style="color:#af00db">if</span><span style="color:#3b3b3b"> </span><span style="color:#0000ff">section.settings</span><span style="color:#001080">.filter_type</span><span style="color:#3b3b3b"> == </span><span style="color:#a31515">'vertical'</span><span style="color:#3b3b3b"> </span><span style="color:#800000">%}</span><span style="color:#0000ff"> facets-vertical page-width</span><span style="color:#800000">{%</span><span style="color:#3b3b3b"> </span><span style="color:#af00db">endif</span><span style="color:#3b3b3b"> </span><span style="color:#800000">%}</span><span style="color:#0000ff">"</span><span style="color:#800000">&gt;</span></div>
<div class="num" style="top:156px;color:#6e7681">126</div>
<div class="code" style="top:156px;left:465.70px"><span style="color:#800000">&gt;</span></div>
<div class="num" style="top:175px;color:#6e7681">141</div>
<div class="code" style="top:175px;left:481.10px"><span style="color:#0431fa">{</span><span style="color:#0000ff">%-</span><span style="color:#3b3b3b"> </span><span style="color:#af00db">else</span><span style="color:#3b3b3b"> </span><span style="color:#0000ff">-%</span><span style="color:#0431fa">}</span></div>
</body></html>
